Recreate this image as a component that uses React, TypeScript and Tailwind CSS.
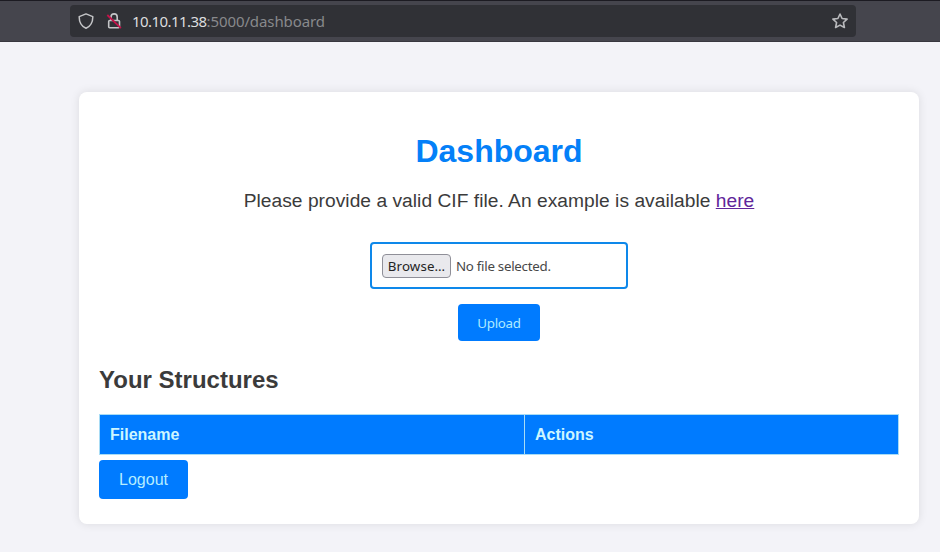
export default function App() {
  return (
    <div className="flex h-[552px] w-[940px] flex-col overflow-hidden bg-[#f3f3f8] font-['Liberation_Sans',Arial,sans-serif] text-[#3b3b3b]">
      <header className="flex h-[42px] shrink-0 items-center border-t border-b border-t-[#1c1b22] border-b-[#38373f] bg-[#45454d] pl-[70px]">
        <div className="flex h-8 w-[786px] items-center rounded bg-[#303136] px-2 font-['Noto_Sans',sans-serif] text-[15px] text-[#88898c]">
          <svg className="size-4" viewBox="0 0 16 16" fill="none" stroke="#c4c5c7" strokeWidth="1.5" strokeLinejoin="round"><path d="M8 .9 14.8 3.6C14.9 9 12.5 13.2 8 15.3 3.5 13.2 1.1 9 1.2 3.6Z" /></svg>
          <svg className="ml-3 size-4" viewBox="0 0 16 16" fill="none" stroke="#c4c5c7" strokeWidth="1.6"><rect x="2.7" y="7.5" width="10.8" height="7.3" rx="1" /><path d="M5 7.5V4a3.1 3.1 0 0 1 6.2 0v3.5" /><path d="m1.3 2 13.6 13.2" stroke="#c5124a" strokeWidth="1.8" /></svg>
          <span className="ml-2.5 grow"><span className="tracking-[-0.56px] text-[#dcdddf]">10.10.11.38</span><span className="tracking-[-0.1px]">:5000/dashboard</span></span>
          <svg className="size-4" viewBox="0 0 16 16" fill="none" stroke="#b9babd" strokeWidth="1.6" strokeLinejoin="round"><path d="m8 1 2.1 4.5 5 .6-3.7 3.4 1 5L8 12.1l-4.4 2.4 1-5L.9 6.1l5-.6Z" /></svg>
        </div>
      </header>
      <main className="mt-[50px] ml-[79px] flex h-[432px] w-[840px] flex-col rounded-lg bg-white px-5 shadow-[0_0_10px_rgba(0,0,0,0.1)]">
        <h1 className="mt-10 text-center text-[32px] leading-[38px] font-bold text-[#0480f8]">Dashboard</h1>
        <p className="mt-5 text-center text-[19.2px] leading-[22px] tracking-[0.03px]">Please provide a valid CIF file. An example is available <a className="text-[#60259a] underline">here</a></p>
        <div className="mt-[30px] flex h-[47px] w-[258px] items-center self-center rounded border-2 border-[#0e88ea] pl-[10px] font-['Noto_Sans',sans-serif] text-[13.333px]">
          <button className="h-6 w-[69px] rounded border border-[#8f8f98] bg-[#e9e9ed] leading-[22px] tracking-[0.1px] text-[#242424]">Browse…</button>
          <span className="ml-[5px] pt-[3px] tracking-[-0.28px] text-[#484848]">No file selected.</span>
        </div>
        <button className="mt-[15px] h-[37px] w-[82px] self-center rounded bg-[#007bff] pt-0.5 font-['Noto_Sans',sans-serif] text-[13.333px] tracking-[-0.3px] text-[#aeeaff]">Upload</button>
        <h2 className="mt-[25px] text-2xl leading-7 font-bold">Your Structures</h2>
        <table className="mt-5 h-[41px] w-[800px] table-fixed border-collapse text-left text-base text-[#cdf6ff]"><thead><tr className="bg-[#007bff]"><th className="w-[425px] border border-[#a8dcf5] px-2.5">Filename</th><th className="border border-[#a8dcf5] px-2.5">Actions</th></tr></thead></table>
        <button className="mt-[5px] h-[39px] w-[89px] rounded bg-[#007bff] text-base text-[#b5edff]">Logout</button>
      </main>
    </div>
  );
}
